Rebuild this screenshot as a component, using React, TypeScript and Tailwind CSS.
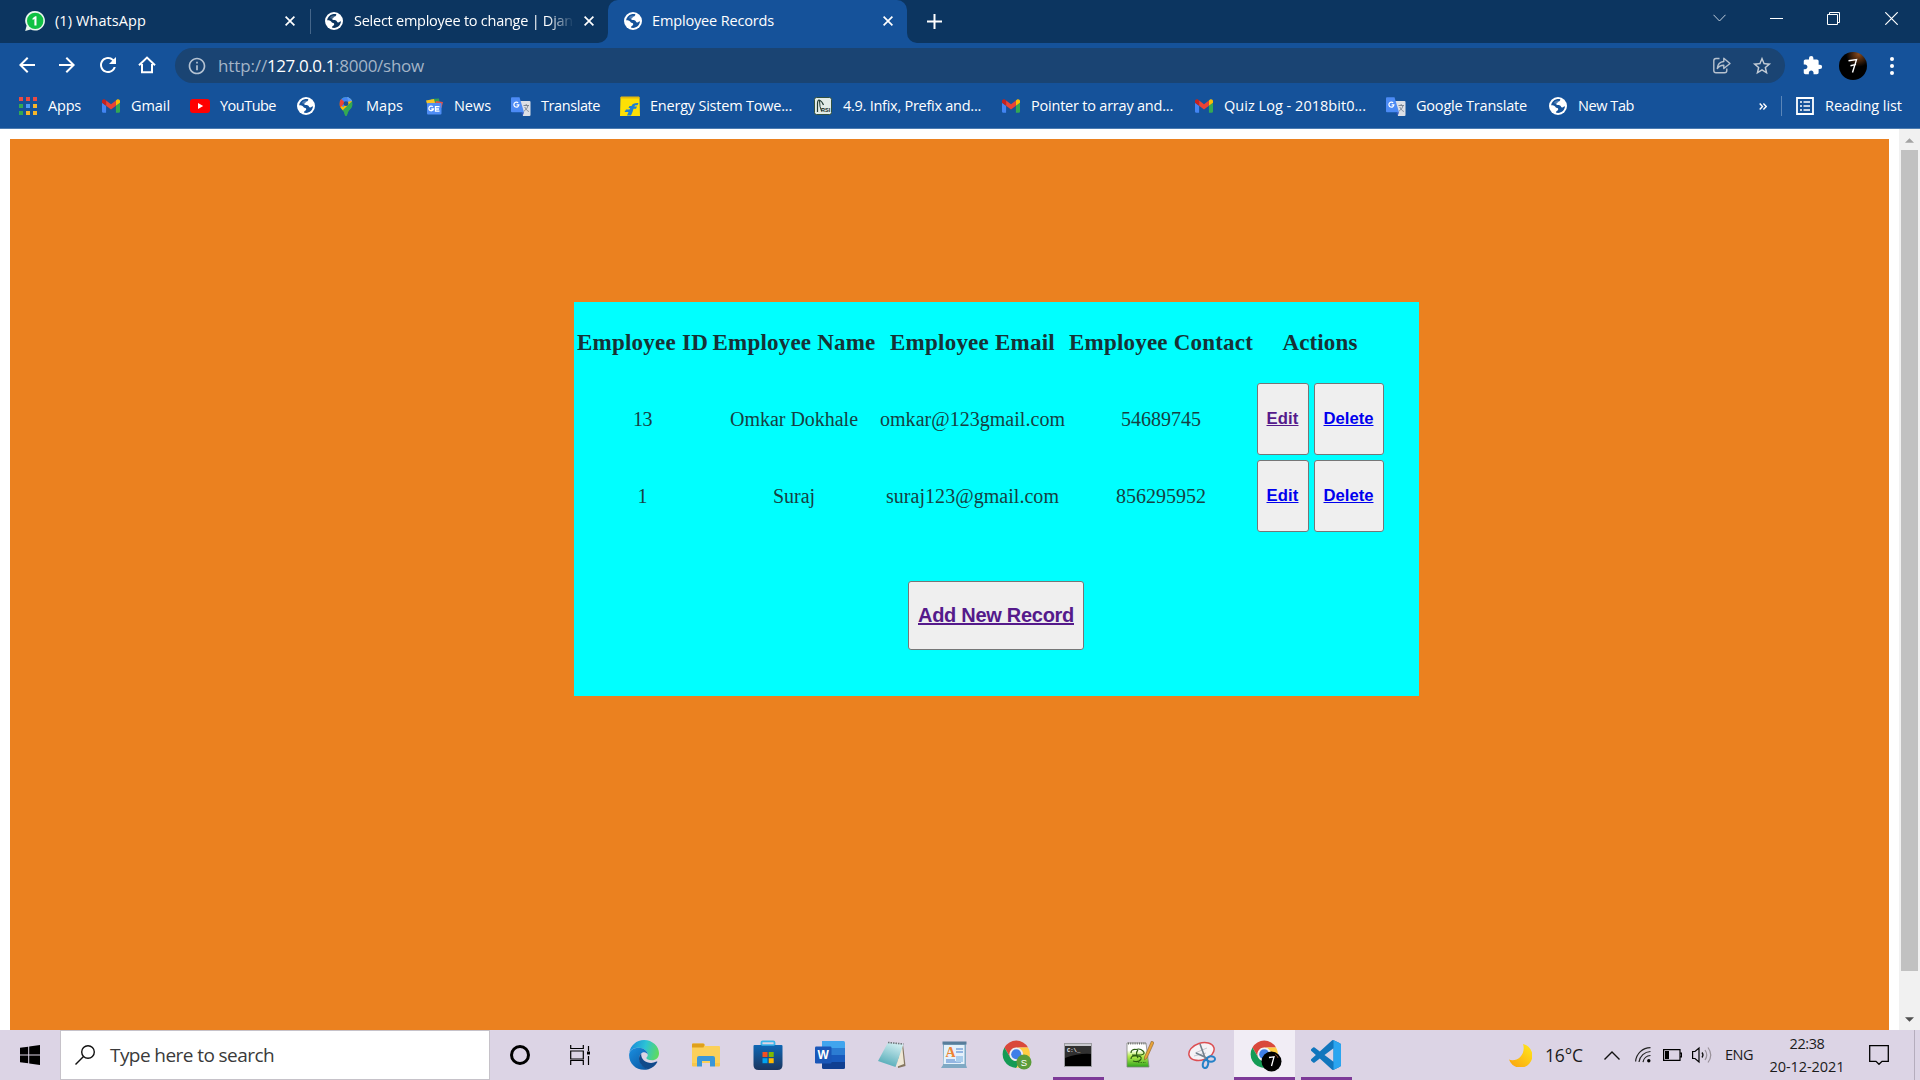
import { useLayoutEffect, useRef, type ReactNode } from "react";
import {
  MdArrowBack,
  MdArrowForward,
  MdRefresh,
  MdInfoOutline,
  MdStarOutline,
  MdExtension,
} from "react-icons/md";

/* Text whose letter spacing is adjusted so the run fills `w` pixels. */
function Fit({ w, children, className = "" }: { w: number; children: string; className?: string }) {
  const ref = useRef<HTMLSpanElement>(null);
  useLayoutEffect(() => {
    const el = ref.current;
    if (!el) return;
    el.style.letterSpacing = "0px";
    const natural = el.getBoundingClientRect().width;
    el.style.letterSpacing = `${(w - natural) / children.length}px`;
  }, [w, children]);
  return (
    <span ref={ref} className={`inline-block whitespace-pre ${className}`}>
      {children}
    </span>
  );
}

function Globe({ land = "#15529a" }: { land?: string }) {
  return (
    <svg viewBox="0 0 18 18" className="size-[18px] shrink-0">
      <circle cx="9" cy="9" r="9" fill="#fff" />
      <path
        d="M10.5 2.1C12 2.4 11.2 3.6 10.4 4.3C9.6 4.9 8.6 4.6 8.5 5.6C8.4 6.4 7 6.2 7.2 7.2C7.5 8.1 9.6 7.7 11 8.4C12.3 9 11.8 10.6 13.2 10.5C14.5 10.4 15.2 9.2 16 9.3C15.8 12.9 12.8 15.9 9.1 16C8 16 7.4 15.8 6.9 15.6C6.9 14.4 8 13.9 8.8 13.3C9.6 12.6 9.3 11.4 8.2 11.1C7 10.8 6.6 10.2 5.8 9.3C4.8 8.3 3.3 8.2 2.1 8.3C2.4 5.3 4.7 2.9 7.5 2.2C8.5 2 9.5 1.9 10.5 2.1Z"
        fill={land}
      />
      <path d="M8.8 3.4C7.5 3.5 6.1 4 5.2 5.3C4.7 6.2 5.9 7.2 7.2 6.6C8 6.2 8.3 5.1 9.2 4.8C10 4.5 10.3 3.6 8.8 3.4Z" fill="#fff" opacity=".25" />
    </svg>
  );
}

function WhatsApp() {
  return (
    <svg viewBox="0 0 20 20" className="size-5 shrink-0">
      <path d="M10.2 0A9.8 9.8 0 1 1 5.6 18.5L.2 20l1.4-5.2A9.8 9.8 0 0 1 10.2 0Z" fill="#e9f7ee" />
      <circle cx="10.2" cy="9.9" r="8.2" fill="#10c143" />
      <path d="M7.6 7.2L10.2 5.2H11.5V14.4H9.4V7.9L7.6 8.9Z" fill="#fff" />
    </svg>
  );
}

function Gmail() {
  return (
    <svg viewBox="52 42 88 66" className="h-[14px] w-[18px] shrink-0">
      <path fill="#4285f4" d="M58 108h14V74L52 59v43c0 3.32 2.69 6 6 6" />
      <path fill="#34a853" d="M120 108h14c3.32 0 6-2.69 6-6V59l-20 15" />
      <path fill="#fbbc04" d="M120 48v26l20-15v-8c0-7.42-8.47-11.65-14.4-7.2" />
      <path fill="#ea4335" d="M72 74V48l24 18 24-18v26L96 92" />
      <path fill="#c5221f" d="M52 51v8l20 15V48l-5.6-4.2c-5.94-4.45-14.4-.22-14.4 7.2" />
    </svg>
  );
}

function AppsGrid() {
  return (
    <div className="grid grid-cols-3 gap-[3px]">
      <i className="size-1 bg-[#ea4b43]" />
      <i className="size-1 bg-[#ea4b43]" />
      <i className="size-1 bg-[#ea4b43]" />
      <i className="size-1 bg-[#34a853]" />
      <i className="size-1 bg-[#4c9bf5]" />
      <i className="size-1 bg-[#f6b52a]" />
      <i className="size-1 bg-[#34a853]" />
      <i className="size-1 bg-[#f6b52a]" />
      <i className="size-1 bg-[#f6b52a]" />
    </div>
  );
}

function YouTube() {
  return (
    <svg viewBox="0 0 20 14" className="h-[14px] w-5">
      <rect width="20" height="14" rx="3" fill="#f00" />
      <path d="M8 4l5.2 3L8 10Z" fill="#fff" />
    </svg>
  );
}

function MapsPin() {
  return (
    <svg viewBox="0 0 14 20" className="h-[19px] w-[14px]">
      <clipPath id="pin">
        <path d="M7 0a7 7 0 0 1 7 7c0 3.6-2.6 5.200-4.300 7.800C8.500 16.700 8.300 20 7 20s-1.500-3.300-2.700-5.200C2.600 12.200 0 10.600 0 7a7 7 0 0 1 7-7Z" />
      </clipPath>
      <g clipPath="url(#pin)">
        <rect width="14" height="20" fill="#34a853" />
        <path d="M14 3L2.500 16.500L-1 11L9 0Z" fill="#fbbc04" />
        <path d="M0 0H14V5L7 7L4 11L0 5Z" fill="#4285f4" />
        <path d="M-1 3L1.500 1.500L6 6L1 11L-1 8Z" fill="#ea4335" />
        <path d="M8 0H14V4L9.500 5Z" fill="#5b9bf8" />
        <path d="M14 4L9 8.800L5 12L4 11L9 5Z" fill="#fbbc04" />
        <path d="M14 4V20H6L3 14.500Z" fill="#34a853" />
      </g>
      <circle cx="7" cy="7" r="2.600" fill="#1c4e91" />
    </svg>
  );
}

function News() {
  return (
    <svg viewBox="0 0 18 17" className="h-[17px] w-[18px]">
      <path d="M6 1L14 .5L15 8H5Z" fill="#2f9e58" />
      <path d="M1 2.500L9 1L11 9L3 9Z" fill="#f7c325" />
      <path d="M11 3L18 4L16.500 10H9Z" fill="#e0524a" />
      <rect x="2" y="5" width="14.500" height="11.500" rx="1" fill="#4f8df5" />
      <path d="M7.800 8.800A2.300 2.300 0 1 0 8.400 11H6.300M14.500 8.600H10.500V13.200H14.500M10.500 11H14" fill="none" stroke="#fff" strokeWidth="1.300" />
    </svg>
  );
}

function TranslateIcon() {
  return (
    <svg viewBox="0 0 20 19" className="h-[19px] w-5">
      <path d="M9 4H18.500Q19.500 4 19.500 5V18Q19.500 19 18.500 19H12Z" fill="#dde0e6" />
      <path d="M1 .3H8.500L13 15.300H1Q0 15.300 0 14.300V1.300Q0 .3 1 .3Z" fill="#4c8bf5" />
      <path d="M9.500 15.300H13L11.800 18.500Z" fill="#2b56c0" />
      <path d="M7.200 5.900A2.500 2.500 0 1 0 7.900 7.800H5.600" fill="none" stroke="#fff" strokeWidth="1.200" />
      <path d="M12.500 8.500H18M15.200 7V8.500M17 8.500C16.500 11 14.800 13 13.200 14M13.800 10C14.500 12 16 13.500 17.800 14.500" fill="none" stroke="#7d8794" strokeWidth="1" />
    </svg>
  );
}

function Flipkart() {
  return (
    <svg viewBox="0 0 20 20" className="size-5">
      <path d="M.5 1H19.500L20 20H0Z" fill="#fde004" />
      <path d="M1 .5H19L19.500 2.500H.5Z" fill="#e5b90a" />
      <path d="M7 19.500L8.500 16H4.500L6 13.500H9.500L10.200 12H8.500L9.500 10H11.500C12.500 7.500 14.500 6.800 18.500 7L17.500 9.200C15.500 9 14.800 9.300 14.300 10.500H17L16 12.800H13.500L12.500 16L11 19.500Z" fill="#1c7fd0" />
    </svg>
  );
}

function Rsi() {
  return (
    <svg viewBox="0 0 18 18" className="size-[18px]">
      <rect x=".5" y=".5" width="17" height="17" rx="2" fill="#e3ece8" stroke="#32503f" />
      <path d="M3.500 15V7Q3.500 3 5 3Q8 4 9.500 8" fill="none" stroke="#223b33" strokeWidth="1.200" />
      <path d="M5.500 3.500Q5.500 10 7.500 14" fill="none" stroke="#223b33" strokeWidth="1" />
      <text x="7" y="14.500" fontSize="5.500" fontWeight="700" fontFamily="Liberation Sans" fill="#152a24">
        RSI
      </text>
    </svg>
  );
}

function Bookmark({ box, icon, label, w = 0 }: { box: string; icon: ReactNode; label?: string; w?: number }) {
  return (
    <div className={`flex shrink-0 items-center gap-[10px] ${box}`}>
      <div className="flex w-5 shrink-0 justify-center">{icon}</div>
      {label && <Fit w={w}>{label}</Fit>}
    </div>
  );
}

function CloseX() {
  return (
    <svg viewBox="0 0 10 10" className="size-[10px]">
      <path d="M.6 .6L9.400 9.400M9.400 .6L.6 9.400" stroke="#fff" strokeWidth="1.700" />
    </svg>
  );
}

function TabStrip() {
  return (
    <div className="flex h-[43px] bg-[#0c3560] text-[14.5px] leading-5 text-white">
      <div className="flex h-[42px] w-[310px] items-center pl-[25px]">
        <WhatsApp />
        <div className="ml-[10px] w-[230px]">
          <Fit w={91}>(1) WhatsApp</Fit>
        </div>
        <CloseX />
      </div>
      <div className="mt-[9px] h-[25px] w-px bg-[#45668a]" />
      <div className="flex h-[42px] w-[297px] items-center pl-[14px]">
        <Globe land="#0c3560" />
        <div className="ml-[11px] w-[220px] [mask-image:linear-gradient(to_right,black_88%,transparent)]">
          <Fit w={219}>Select employee to change | Djan</Fit>
        </div>
        <div className="ml-[10px]">
          <CloseX />
        </div>
      </div>
      <div className="relative flex h-[43px] w-[299px] items-center rounded-t-[10px] bg-[#15529a] pb-px pl-[16px]">
        <svg viewBox="0 0 10 10" className="absolute bottom-0 -left-[10px] size-[10px]">
          <path d="M10 0V10H0A10 10 0 0 0 10 0Z" fill="#15529a" />
        </svg>
        <svg viewBox="0 0 10 10" className="absolute -right-[10px] bottom-0 size-[10px]">
          <path d="M0 0V10H10A10 10 0 0 1 0 0Z" fill="#15529a" />
        </svg>
        <Globe />
        <div className="ml-[10px] w-[231px]">
          <Fit w={122}>Employee Records</Fit>
        </div>
        <CloseX />
      </div>
      <svg viewBox="0 0 15 15" className="mt-[14px] ml-[20px] size-[15px]">
        <path d="M7.500 0V15M0 7.500H15" stroke="#fff" strokeWidth="2" />
      </svg>
      <div className="flex-1" />
      <div className="mt-[11px] mr-[22px] flex h-[14px] items-center">
        <svg viewBox="0 0 13 8" className="w-[13px]">
          <path d="M.5 .8L6.500 7L12.500 .8" fill="none" stroke="#c3d0de" />
        </svg>
        <div className="ml-[44px] h-px w-[13px] bg-white" />
        <svg viewBox="0 0 13 13" className="ml-[44px] size-[13px]">
          <path d="M.5 2.500H10.500V12.500H.5ZM2.500 2.500V.5H12.500V10.500H10.500" fill="none" stroke="#fff" />
        </svg>
        <svg viewBox="0 0 13 13" className="ml-[45px] size-[13px]">
          <path d="M.3 .3L12.700 12.700M12.700 .3L.3 12.700" stroke="#fff" strokeWidth="1.200" />
        </svg>
      </div>
    </div>
  );
}

function Toolbar() {
  return (
    <div className="flex h-[45px] items-center bg-[#15529a] text-white">
      <div className="flex w-[175px] items-center pb-px pl-[15px]">
        <MdArrowBack className="mr-4 size-6" />
        <MdArrowForward className="mr-[17px] size-6" />
        <MdRefresh className="mr-[18px] size-6" />
        <svg viewBox="0 0 18 18" className="size-[18px]">
          <path d="M4 8V16.300H14V8M1 9.300L9 1.600L17 9.300" fill="none" stroke="#fff" strokeWidth="2" />
        </svg>
      </div>
      <div className="flex h-[35px] w-[1610px] items-center rounded-full bg-[#1a4473] pl-3">
        <MdInfoOutline className="size-5 text-[#b5c3d3]" />
        <div className="ml-[11px] flex text-[17px] leading-6 text-[#a3b4c7]">
          <Fit w={49}>http://</Fit>
          <Fit w={68} className="text-white">127.0.0.1</Fit>
          <Fit w={89}>:8000/show</Fit>
        </div>
        <div className="flex-1" />
        <svg viewBox="0 0 18 17" className="mr-[20px] h-[17px] w-[18px]">
          <path
            d="M6.500 1.500H3Q.8 1.500 .8 3.700V13.500Q.8 15.800 3 15.800H11.500Q13.800 15.800 13.800 13.500V11.500M4.300 11.500Q4.800 5 10.800 4.500V1.300L17 6.500L10.800 11.500V8.300Q6.500 8.200 4.300 11.500Z"
            fill="none"
            stroke="#b7c2cf"
            strokeWidth="1.400"
            strokeLinejoin="round"
          />
        </svg>
        <MdStarOutline className="mr-[12px] size-[22px] text-[#c3ccd6]" />
      </div>
      <MdExtension className="ml-[17px] size-[21px]" />
      <svg viewBox="0 0 28 28" className="ml-4 size-7">
        <defs>
          <radialGradient id="glow" cx="0.7" cy="0.08" r="0.45">
            <stop offset="0" stopColor="#8a4a1c" />
            <stop offset="1" stopColor="#000" />
          </radialGradient>
        </defs>
        <circle cx="14" cy="14" r="14" fill="url(#glow)" />
        <path d="M9.500 8.800L17.500 7.600L13.500 20.500M11.500 13.800L17 12.400" fill="none" stroke="#fff" strokeWidth="1.400" />
      </svg>
      <div className="ml-[23px] flex flex-col gap-[3px]">
        <i className="size-1 rounded-full bg-white" />
        <i className="size-1 rounded-full bg-white" />
        <i className="size-1 rounded-full bg-white" />
      </div>
    </div>
  );
}

function BookmarksBar() {
  return (
    <div className="flex h-[41px] items-center border-b border-[#4d7cb0] bg-[#15529a] pb-1 pl-[18px] text-[14.5px] leading-5 text-white">
      <Bookmark box="w-[83px]" icon={<AppsGrid />} label="Apps" w={33} />
      <Bookmark box="w-[89px]" icon={<Gmail />} label="Gmail" w={39} />
      <Bookmark box="w-[106px]" icon={<YouTube />} label="YouTube" w={56} />
      <Bookmark box="w-[40px]" icon={<Globe />} />
      <Bookmark box="w-[88px]" icon={<MapsPin />} label="Maps" w={37} />
      <Bookmark box="w-[87px]" icon={<News />} label="News" w={37} />
      <Bookmark box="w-[109px]" icon={<TranslateIcon />} label="Translate" w={59} />
      <Bookmark box="w-[193px]" icon={<Flipkart />} label="Energy Sistem Towe..." w={142} />
      <Bookmark box="w-[188px]" icon={<Rsi />} label="4.9. Infix, Prefix and..." w={138} />
      <Bookmark box="w-[193px]" icon={<Gmail />} label="Pointer to array and..." w={142} />
      <Bookmark box="w-[192px]" icon={<Gmail />} label="Quiz Log - 2018bit0..." w={142} />
      <Bookmark box="w-[162px]" icon={<TranslateIcon />} label="Google Translate" w={111} />
      <Bookmark box="w-[211px]" icon={<Globe />} label="New Tab" w={56} />
      <svg viewBox="0 0 8 7" className="h-[7px] w-2">
        <path d="M.7 .5L3.500 3.500L.7 6.500M4.400 .5L7.200 3.500L4.400 6.500" fill="none" stroke="#fff" strokeWidth="1.400" />
      </svg>
      <div className="ml-[14px] h-5 w-px bg-[#5b86b8]" />
      <svg viewBox="0 0 18 18" className="ml-[14px] size-[18px]">
        <path d="M1 1H17V17H1Z" fill="none" stroke="#fff" strokeWidth="1.800" />
        <path d="M4 5H6M4 9H6M4 13H6M7.500 5H14M7.500 9H14M7.500 13H14" stroke="#fff" strokeWidth="1.700" />
      </svg>
      <Fit w={77} className="ml-[11px]">Reading list</Fit>
    </div>
  );
}

type Employee = {
  id: string;
  idW: number;
  name: string;
  nameW: number;
  email: string;
  emailW: number;
  contact: string;
  contactW: number;
  editClass: string;
};

const employees: Employee[] = [
  { id: "13", idW: 19, name: "Omkar Dokhale", nameW: 128, email: "omkar@123gmail.com", emailW: 185, contact: "54689745", contactW: 80, editClass: "text-[#551a8b]" },
  { id: "1", idW: 10, name: "Suraj", nameW: 42, email: "suraj123@gmail.com", emailW: 173, contact: "856295952", contactW: 90, editClass: "text-[#0000ee]" },
];

const columns = "grid grid-cols-[137px_166px_191px_186px_132px] justify-items-center items-center";
const buttonBox = "flex items-center justify-center rounded-[3px] border border-[#767676] bg-[#efefef] font-['Liberation_Sans',Arial,sans-serif] font-bold";

function EmployeeCard() {
  return (
    <div className="ml-[564px] h-[394px] w-[845px] bg-[#00ffff] font-['Liberation_Serif','Times_New_Roman',serif] text-[#212529]">
      <div className={`${columns} h-[80px] pt-[2px] text-[23px] leading-7 font-bold text-[#173236]`}>
        <Fit w={131}>Employee ID</Fit>
        <Fit w={163}>Employee Name</Fit>
        <Fit w={165}>Employee Email</Fit>
        <Fit w={184}>Employee Contact</Fit>
        <Fit w={75}>Actions</Fit>
      </div>
      <div className="flex flex-col gap-[5px] pt-px text-[#173f43]">
        {employees.map((e) => (
          <div key={e.id} className={`${columns} h-[72px] text-[20px] leading-7`}>
            <Fit w={e.idW}>{e.id}</Fit>
            <Fit w={e.nameW}>{e.name}</Fit>
            <Fit w={e.emailW}>{e.email}</Fit>
            <Fit w={e.contactW}>{e.contact}</Fit>
            <div className="flex gap-[5px] text-[16.67px]">
              <button className={`${buttonBox} h-[72px] w-[52px]`}>
                <Fit w={32} className={`underline ${e.editClass}`}>Edit</Fit>
              </button>
              <button className={`${buttonBox} h-[72px] w-[70px]`}>
                <Fit w={50} className="text-[#0000ee] underline">Delete</Fit>
              </button>
            </div>
          </div>
        ))}
      </div>
      <button className={`${buttonBox} mt-[49px] ml-[334px] h-[69px] w-[176px] pb-[2px] text-[20px]`}>
        <Fit w={156} className="text-[#551a8b] underline">Add New Record</Fit>
      </button>
    </div>
  );
}

function ScrollBar() {
  return (
    <div className="flex w-[21px] flex-col items-center bg-[#f1f1f1]">
      <svg viewBox="0 0 10 5" className="mt-[9px] h-[5px] w-[9px]">
        <path d="M5 0L10 5H0Z" fill="#a3a3a3" />
      </svg>
      <div className="mt-[7px] h-[821px] w-[17px] bg-[#c1c1c1]" />
      <svg viewBox="0 0 10 5" className="mt-[46px] h-[5px] w-[9px]">
        <path d="M0 0H10L5 5Z" fill="#505050" />
      </svg>
    </div>
  );
}

function Chrome({ badge }: { badge: ReactNode }) {
  return (
    <svg viewBox="0 0 32 32" className="ml-[2px] size-8 overflow-visible">
      <g transform="translate(1 1) scale(.62) translate(-1 -1)">
        <path d="M24 13H43.050A22 22 0 0 0 4.950 13L14.470 29.500A11 11 0 0 1 24 13Z" fill="#d9483b" />
        <path d="M14.470 29.500L4.950 13A22 22 0 0 0 24 46L33.530 29.500A11 11 0 0 1 14.470 29.500Z" fill="#149b55" />
        <path d="M33.530 29.500L24 46A22 22 0 0 0 43.050 13H24A11 11 0 0 1 33.530 29.500Z" fill="#ffcd42" />
        <circle cx="24" cy="24" r="10.500" fill="#f1f1f1" />
        <circle cx="24" cy="24" r="8.200" fill="#3f7ee8" />
      </g>
      {badge}
    </svg>
  );
}

function Edge() {
  return (
    <svg viewBox="0 0 30 30" className="size-[30px]">
      <defs>
        <linearGradient id="edgeTop" x1="0" y1="0.4" x2="1" y2="0.6">
          <stop offset="0" stopColor="#1b8bd9" />
          <stop offset=".5" stopColor="#2cc3d6" />
          <stop offset="1" stopColor="#5fdb5b" />
        </linearGradient>
        <linearGradient id="edgeLow" x1="0" y1="0" x2="0.8" y2="1">
          <stop offset="0" stopColor="#1a8fe0" />
          <stop offset="1" stopColor="#0c59a4" />
        </linearGradient>
      </defs>
      <path d="M.3 12.500C1.500 5.500 7.500 0 15 0C23.500 0 30 6.500 30 13.300C30 17.800 26.800 20.300 23 20.300C19.500 20.300 17.300 19.300 17.300 18.100C17.300 17.200 18.800 16.900 18.800 14.700C18.800 11.200 14.700 7.700 9.500 7.700C5 7.700 1.800 9.700 .3 12.500Z" fill="url(#edgeTop)" />
      <path d="M.1 15C.1 10.500 4.500 7.700 9.500 7.700C14.700 7.700 18.800 11.200 18.800 14.700C18 12.500 15.500 11.600 13.500 12.600C10.500 14.100 9.500 17.800 11 21.600C12.500 25.600 16 28.300 19.500 29.200C9 32 0 24.500 .1 15Z" fill="url(#edgeLow)" />
      <path d="M12.200 13.500C9.600 16 9.300 20 11.500 23.500C13.800 27.200 16.800 29.100 19.500 29.200C23.500 28 26.500 25.300 28.200 22.200C28.600 21.500 28 21.200 27.400 21.600C21 25 11.500 21.500 12.200 13.500Z" fill="#114a8b" />
    </svg>
  );
}

function Explorer() {
  return (
    <svg viewBox="0 0 28 24" className="h-6 w-7">
      <path d="M0 1.500Q0 .5 1 .5H11L13.500 3H27Q28 3 28 4V20H0Z" fill="#fbd05a" />
      <path d="M0 1.500Q0 .5 1 .5H11.500Q13 .5 12.500 2L11.500 4.500H0Z" fill="#dfa01b" />
      <path d="M5 23.500V15Q5 13 7 13H21Q23 13 23 15V23.500H18V18H10V23.500Z" fill="#3a97d8" />
      <path d="M0 20H5V23.500H1Q0 23.500 0 22.500ZM23 20H28V22.500Q28 23.500 27 23.500H23Z" fill="#f7c64b" />
    </svg>
  );
}

function Store() {
  return (
    <svg viewBox="0 0 30 30" className="size-[30px]">
      <defs>
        <linearGradient id="bag" x1="0" y1="0" x2="0" y2="1">
          <stop offset="0" stopColor="#0f67b5" />
          <stop offset="1" stopColor="#1b365f" />
        </linearGradient>
      </defs>
      <path d="M8.500 8V2.500Q8.500 1.300 9.700 1.300H20.300Q21.500 1.300 21.500 2.500V8" fill="none" stroke="#38b5ea" strokeWidth="1.800" />
      <path d="M.5 6Q.5 5 1.500 5H28.500Q29.500 5 29.500 6V25Q29.500 30 24.500 30H5.500Q.5 30 .5 25Z" fill="url(#bag)" />
      <path d="M8.500 5H21.500" stroke="#38b5ea" strokeWidth="1.500" />
      <path d="M9.500 12H14.500V17H9.500Z" fill="#f25022" />
      <path d="M15.700 12H20.700V17H15.700Z" fill="#7fba00" />
      <path d="M9.500 18.200H14.500V23.200H9.500Z" fill="#00a4ef" />
      <path d="M15.700 18.200H20.700V23.200H15.700Z" fill="#ffb900" />
    </svg>
  );
}

function Word() {
  return (
    <svg viewBox="0 0 30 28" className="h-7 w-[30px]">
      <path d="M7 0H28.500Q30 0 30 1.500V7H7Z" fill="#41a5ee" />
      <path d="M7 7H30V14H7Z" fill="#2b7cd3" />
      <path d="M7 14H30V21H7Z" fill="#185abd" />
      <path d="M7 21H30V26.500Q30 28 28.500 28H8.500Q7 28 7 26.500Z" fill="#103f91" />
      <rect y="5.500" width="16.500" height="17" rx="1.200" fill="#1a57b8" />
      <text x="8.200" y="18.300" textAnchor="middle" fontFamily="Liberation Sans" fontSize="12" fontWeight="700" fill="#fff">
        W
      </text>
    </svg>
  );
}

function Notepad() {
  return (
    <svg viewBox="0 0 30 28" className="h-7 w-[30px]">
      <defs>
        <linearGradient id="note" x1="0.7" y1="0" x2="0.3" y2="1">
          <stop offset="0" stopColor="#d3eff2" />
          <stop offset="1" stopColor="#4fa8b5" />
        </linearGradient>
      </defs>
      <path d="M26 3L28.500 25L21 27L20 10Z" fill="#857660" />
      <path d="M25 3L27 23L19 26Z" fill="#efe8d6" />
      <path d="M11 1.500L26.500 3L18.500 26L1 20Z" fill="url(#note)" />
      <path d="M11 1.500L26.500 3" stroke="#70777b" strokeWidth="1.600" strokeDasharray="1.500 1" />
    </svg>
  );
}

function WordPad() {
  return (
    <svg viewBox="0 0 26 28" className="h-7 w-[26px]">
      <path d="M2 1H25V24L26 27H0L2 24Z" fill="#7fa9c4" />
      <path d="M3 4H23.500V23H2.500Z" fill="#e5f1fa" />
      <path d="M1.500 .5H25.500V3.500H1.500Z" fill="#587d9b" />
      <path d="M15 8H22M15 11H22M5 19H14M5 21H20" stroke="#7aa3da" strokeWidth="1.300" />
      <path d="M15 15H22V21H15Z" fill="#a9cdec" />
      <text x="4.500" y="16" fontFamily="Liberation Serif" fontSize="14" fontWeight="700" fill="#ee8434">
        A
      </text>
    </svg>
  );
}

function Terminal() {
  return (
    <svg viewBox="0 0 28 24" className="mb-px h-6 w-7">
      <rect x=".5" y=".5" width="27" height="23" fill="#000" stroke="#9b9ba0" />
      <path d="M1 1H27V3H1Z" fill="#c9c9ce" />
      <path d="M1 3H27V11Q15 10 1 15Z" fill="#303030" />
      <text x="3" y="8.800" fontFamily="Liberation Mono" fontSize="5.500" fontWeight="700" fill="#f2f2f2">
        C:\_
      </text>
    </svg>
  );
}

function NotepadPlus() {
  return (
    <svg viewBox="0 0 28 28" className="size-7">
      <defs>
        <linearGradient id="npp" x1="0" y1="0" x2="0" y2="1">
          <stop offset=".3" stopColor="#fff" />
          <stop offset=".55" stopColor="#b6ec4c" />
          <stop offset="1" stopColor="#2fa51c" />
        </linearGradient>
      </defs>
      <path d="M1 2H20L23 26H1Z" fill="url(#npp)" stroke="#81857f" strokeWidth=".8" />
      <path d="M2 2.500H20" stroke="#6c6c6c" strokeWidth="2" strokeDasharray="1 1.200" />
      <path d="M5 12Q5 8 10 8.500Q14 7 17 10Q20 13 15 14H6M5 18Q5 14 11 15Q16 15 15 18Q13 22 7 20M12 9Q9 12 12 17" fill="none" stroke="#2a5c12" strokeWidth="1.200" />
      <path d="M12 21.500H20" stroke="#3a7d1a" strokeDasharray="1.500 1" />
      <path d="M25.500 0L28 1.500L21 17L18.500 19L18.500 16Z" fill="#e8a33a" stroke="#86602a" strokeWidth=".6" />
    </svg>
  );
}

function Snip() {
  return (
    <svg viewBox="0 0 28 28" className="size-7">
      <ellipse cx="13.500" cy="10.500" rx="13" ry="8.500" transform="rotate(-18 13.500 10.500)" fill="#f5f2f6" stroke="#dc4e52" strokeWidth="1.500" />
      <path d="M7 12L19 7M6 15L18 12" stroke="#c6c6cf" />
      <path d="M12 3L17.500 18M8 12L19 17" stroke="#73808c" strokeWidth="1.600" />
      <ellipse cx="23" cy="18" rx="4" ry="2.700" fill="none" stroke="#2582c8" strokeWidth="2" />
      <ellipse cx="17.500" cy="23" rx="2.600" ry="4" fill="none" stroke="#2582c8" strokeWidth="2" transform="rotate(12 17.500 23)" />
    </svg>
  );
}

function VsCode() {
  return (
    <svg viewBox="0 0 24 24" className="size-[30px]">
      <path
        d="M23.150 2.587L18.210.21a1.494 1.494 0 0 0-1.705.29l-9.460 8.630-4.120-3.128a.999.999 0 0 0-1.276.057L.327 7.261A1 1 0 0 0 .326 8.740L3.899 12 .326 15.260a1 1 0 0 0 .001 1.479L1.650 17.940a.999.999 0 0 0 1.276.057l4.120-3.128 9.460 8.630a1.492 1.492 0 0 0 1.704.290l4.942-2.377A1.500 1.500 0 0 0 24 20.060V3.939a1.500 1.500 0 0 0-.850-1.352zm-5.146 14.861L10.826 12l7.178-5.448v10.896z"
        fill="#1176bd"
      />
      <path d="M23.150 2.587L18.004 .15V23.850L23.150 21.410A1.500 1.500 0 0 0 24 20.060V3.939A1.500 1.500 0 0 0 23.150 2.587Z" fill="#2aa5f0" />
    </svg>
  );
}

function Task({ children, state = "" }: { children: ReactNode; state?: "" | "open" | "active" }) {
  return (
    <div className="flex h-[50px] w-[62px] shrink-0 justify-center">
      <div className={`flex flex-col items-center ${state === "active" ? "w-[61px] bg-[#f1edf5]" : "w-[51px]"}`}>
        <div className="flex h-[47px] items-center pt-[3px]">{children}</div>
        {state !== "" && <div className="h-[3px] w-full bg-[#7d3a98]" />}
      </div>
    </div>
  );
}

function Taskbar() {
  return (
    <div className="flex h-[50px] items-center bg-[#dcd4e5] text-[#1b1b1b]">
      <svg viewBox="0 0 20 20" className="ml-5 size-5">
        <path d="M0 2.800L8.200 1.700V9.500H0ZM9.200 1.500L20 0V9.500H9.200ZM0 10.500H8.200V18.300L0 17.200ZM9.200 10.500H20V20L9.200 18.500Z" fill="#000" />
      </svg>
      <div className="ml-5 flex h-[50px] w-[430px] items-center border border-[#c6c2c9] bg-white pl-[14px]">
        <svg viewBox="0 0 20 20" className="size-5">
          <circle cx="13" cy="7" r="6.300" fill="none" stroke="#111" strokeWidth="1.400" />
          <path d="M8.500 11.500L.5 19.500" stroke="#111" strokeWidth="1.400" />
        </svg>
        <Fit w={164} className="ml-[15px] text-[19px] leading-7 text-[#3a3a3a]">Type here to search</Fit>
      </div>
      <div className="flex w-[60px] justify-center">
        <div className="size-5 rounded-full border-[3px] border-black" />
      </div>
      <div className="flex w-[63px] pl-[20px]">
        <svg viewBox="0 0 20 20" className="size-5">
          <path d="M.7 0V3.500H13.300V0M.7 20V15.500H13.300V20M.7 6H13.300V14H.7ZM18.500 1V6M18.500 11V20" fill="none" stroke="#000" strokeWidth="1.200" />
          <path d="M17 6.500H20V9.500H17Z" />
        </svg>
      </div>
      <Task><Edge /></Task>
      <Task><Explorer /></Task>
      <Task><Store /></Task>
      <Task><Word /></Task>
      <Task><Notepad /></Task>
      <Task><WordPad /></Task>
      <Task>
        <Chrome
          badge={
            <>
              <circle cx="23" cy="23" r="7.500" fill="#5a9c3a" />
              <text x="23" y="26.500" textAnchor="middle" fontFamily="Liberation Sans" fontSize="9.500" fill="#fff">S</text>
            </>
          }
        />
      </Task>
      <Task state="open"><Terminal /></Task>
      <Task><NotepadPlus /></Task>
      <Task><Snip /></Task>
      <Task state="active">
        <Chrome
          badge={
            <>
              <circle cx="22.500" cy="22.500" r="10" fill="#000" />
              <path d="M20 18.500L25 17.800L22.500 27" fill="none" stroke="#fff" strokeWidth="1.300" />
              <path d="M26 15.500Q29 17 29 19" stroke="#7b451f" fill="none" />
            </>
          }
        />
      </Task>
      <Task state="open"><VsCode /></Task>
      <div className="flex-1" />
      <svg viewBox="0 0 23 23" className="mr-[13px] size-[23px]">
        <defs>
          <linearGradient id="moon" x1="1" y1="0.2" x2="0.3" y2="1">
            <stop offset="0" stopColor="#ffe21a" />
            <stop offset="1" stopColor="#fbab10" />
          </linearGradient>
        </defs>
        <path d="M14 0A12 12 0 1 1 0 15.500C3 17 8 16.300 11.200 13C14.600 9.500 15.500 4.500 14 0Z" fill="url(#moon)" />
      </svg>
      <Fit w={38} className="text-[17.5px] leading-6">16°C</Fit>
      <svg viewBox="0 0 16 9" className="ml-[21px] h-[9px] w-4">
        <path d="M.5 8.500L8 1L15.500 8.500" fill="none" stroke="#111" strokeWidth="1.400" />
      </svg>
      <svg viewBox="0 0 16 16" className="ml-[15px] size-4">
        <path d="M.6 14.500A15 15 0 0 1 15.500 .6M4 15A12 12 0 0 1 15.500 4.500M8 15.200A8 8 0 0 1 15.500 8.500" fill="none" stroke="#222" strokeWidth="1.200" />
        <circle cx="13.800" cy="13.800" r="1.700" />
      </svg>
      <svg viewBox="0 0 19 12" className="ml-[12px] h-3 w-[19px]">
        <path d="M.6 .6H17V11.400H.6ZM17 4.200H18.500V7.800H17" fill="none" stroke="#000" strokeWidth="1.200" />
        <path d="M2 2H6V10H2Z" />
      </svg>
      <svg viewBox="0 0 21 18" className="ml-[10px] h-[18px] w-[21px]">
        <path d="M.6 5.500H3L7 2V16L3 12.500H.6Z" fill="none" stroke="#000" strokeWidth="1.200" />
        <path d="M10 6.500Q12 9 10 11.500" fill="none" stroke="#111" strokeWidth="1.300" />
        <path d="M13 4Q16.500 9 13 14M16 1.500Q21.500 9 16 16.500" fill="none" stroke="#989099" strokeWidth="1.200" />
      </svg>
      <Fit w={28} className="ml-[12px] text-[14.5px] leading-5">ENG</Fit>
      <div className="ml-[16px] flex w-[76px] flex-col items-center text-[14.5px] leading-[23px]">
        <Fit w={35}>22:38</Fit>
        <Fit w={75}>20-12-2021</Fit>
      </div>
      <svg viewBox="0 0 20 20" className="ml-[24px] size-5">
        <path d="M.7 .7H19.300V16.300H13L10 19.300L7 16.300H.7Z" fill="none" stroke="#000" strokeWidth="1.300" />
      </svg>
      <div className="mr-[5px] ml-[25px] h-[50px] w-px bg-[#b5adbd]" />
    </div>
  );
}

export default function App() {
  return (
    <div className="flex h-[1080px] w-[1920px] flex-col overflow-hidden bg-white font-['Open_Sans','Noto_Sans',sans-serif]">
      <TabStrip />
      <Toolbar />
      <BookmarksBar />
      <main className="flex h-[901px]">
        <div className="flex-1 pt-[10px] pr-[10px] pl-[10px]">
          <div className="h-[891px] bg-[#eb811f] pt-[163px]">
            <EmployeeCard />
          </div>
        </div>
        <ScrollBar />
      </main>
      <Taskbar />
    </div>
  );
}
